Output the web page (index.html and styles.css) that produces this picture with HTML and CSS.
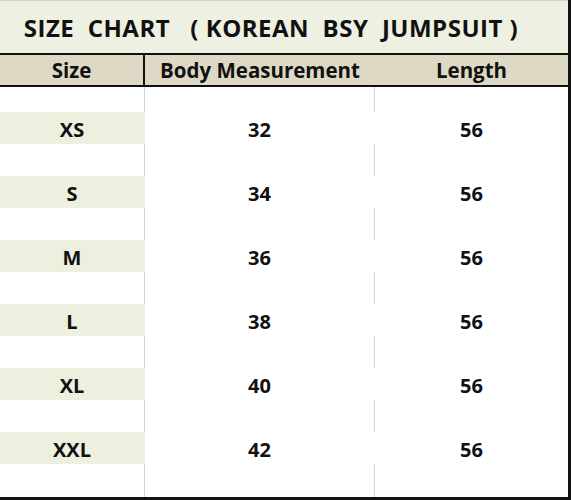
FILE: index.html
```
<!DOCTYPE html>
<html>
<head>
<meta charset="utf-8">
<link rel="stylesheet" href="styles.css">
</head>
<body>
<div class="sheet">
  <div class="title">SIZE&nbsp; CHART&nbsp; &nbsp;( KOREAN&nbsp; BSY&nbsp; JUMPSUIT )</div>
  <div class="head">
    <div class="hcell first">Size</div>
    <div class="hcell">Body Measurement</div>
    <div class="hcell">Length</div>
  </div>
  <div class="data">
    <div class="row gap top"><div class="cell c1"></div><div class="cell c2"></div><div class="cell c3"></div></div>
    <div class="row val"><div class="cell c1">XS</div><div class="cell c2">32</div><div class="cell c3">56</div></div>
    <div class="row gap"><div class="cell c1"></div><div class="cell c2"></div><div class="cell c3"></div></div>
    <div class="row val"><div class="cell c1">S</div><div class="cell c2">34</div><div class="cell c3">56</div></div>
    <div class="row gap"><div class="cell c1"></div><div class="cell c2"></div><div class="cell c3"></div></div>
    <div class="row val"><div class="cell c1">M</div><div class="cell c2">36</div><div class="cell c3">56</div></div>
    <div class="row gap"><div class="cell c1"></div><div class="cell c2"></div><div class="cell c3"></div></div>
    <div class="row val"><div class="cell c1">L</div><div class="cell c2">38</div><div class="cell c3">56</div></div>
    <div class="row gap"><div class="cell c1"></div><div class="cell c2"></div><div class="cell c3"></div></div>
    <div class="row val"><div class="cell c1">XL</div><div class="cell c2">40</div><div class="cell c3">56</div></div>
    <div class="row gap"><div class="cell c1"></div><div class="cell c2"></div><div class="cell c3"></div></div>
    <div class="row val"><div class="cell c1">XXL</div><div class="cell c2">42</div><div class="cell c3">56</div></div>
    <div class="row gap bottom"><div class="cell c1"></div><div class="cell c2"></div><div class="cell c3"></div></div>
  </div>
</div>
</body>
</html>
```
FILE: styles.css
```
html, body {
  margin: 0;
  padding: 0;
  background: #ffffff;
}
.sheet {
  width: 568px;
  height: 497px;
  border-right: 3px solid #111;
  border-bottom: 3px solid #111;
  font-family: "Open Sans", Lato, sans-serif;
  font-weight: 700;
  color: #111;
  display: flex;
  flex-direction: column;
}
.title {
  height: 52px;
  border-top: 1px solid #d4d4cc;
  border-bottom: 2px solid #111;
  background: #eef1e2;
  display: flex;
  align-items: center;
  justify-content: center;
  font-size: 24px;
  letter-spacing: 0.5px;
  padding-right: 26px;
  white-space: pre;
}
.head {
  height: 30px;
  border-bottom: 2px solid #111;
  background: #ddd9c5;
  display: grid;
  grid-template-columns: 145px 230px 1fr;
}
.hcell {
  display: flex;
  align-items: center;
  justify-content: center;
  font-size: 20.5px;
}
.hcell.first {
  border-right: 2px solid #111;
}
.data {
  flex: 1;
  display: flex;
  flex-direction: column;
}
.row {
  display: grid;
  grid-template-columns: 145px 230px 1fr;
}
.row.gap { height: 32px; }
.row.gap.top { height: 25px; }
.row.gap.bottom { height: 33px; }
.row.val { height: 32px; }
.cell {
  display: flex;
  align-items: center;
  justify-content: center;
  font-size: 20px;
}
.row.gap .c1,
.row.gap .c2 {
  border-right: 1px solid #d6d6d6;
}
.row.val .c1 {
  background: #edf0df;
  border-right: 1px solid #edf0df;
}
.row.val .c2 {
  border-right: 1px solid transparent;
}
.row.val .cell {
  padding-top: 3px;
}
```
